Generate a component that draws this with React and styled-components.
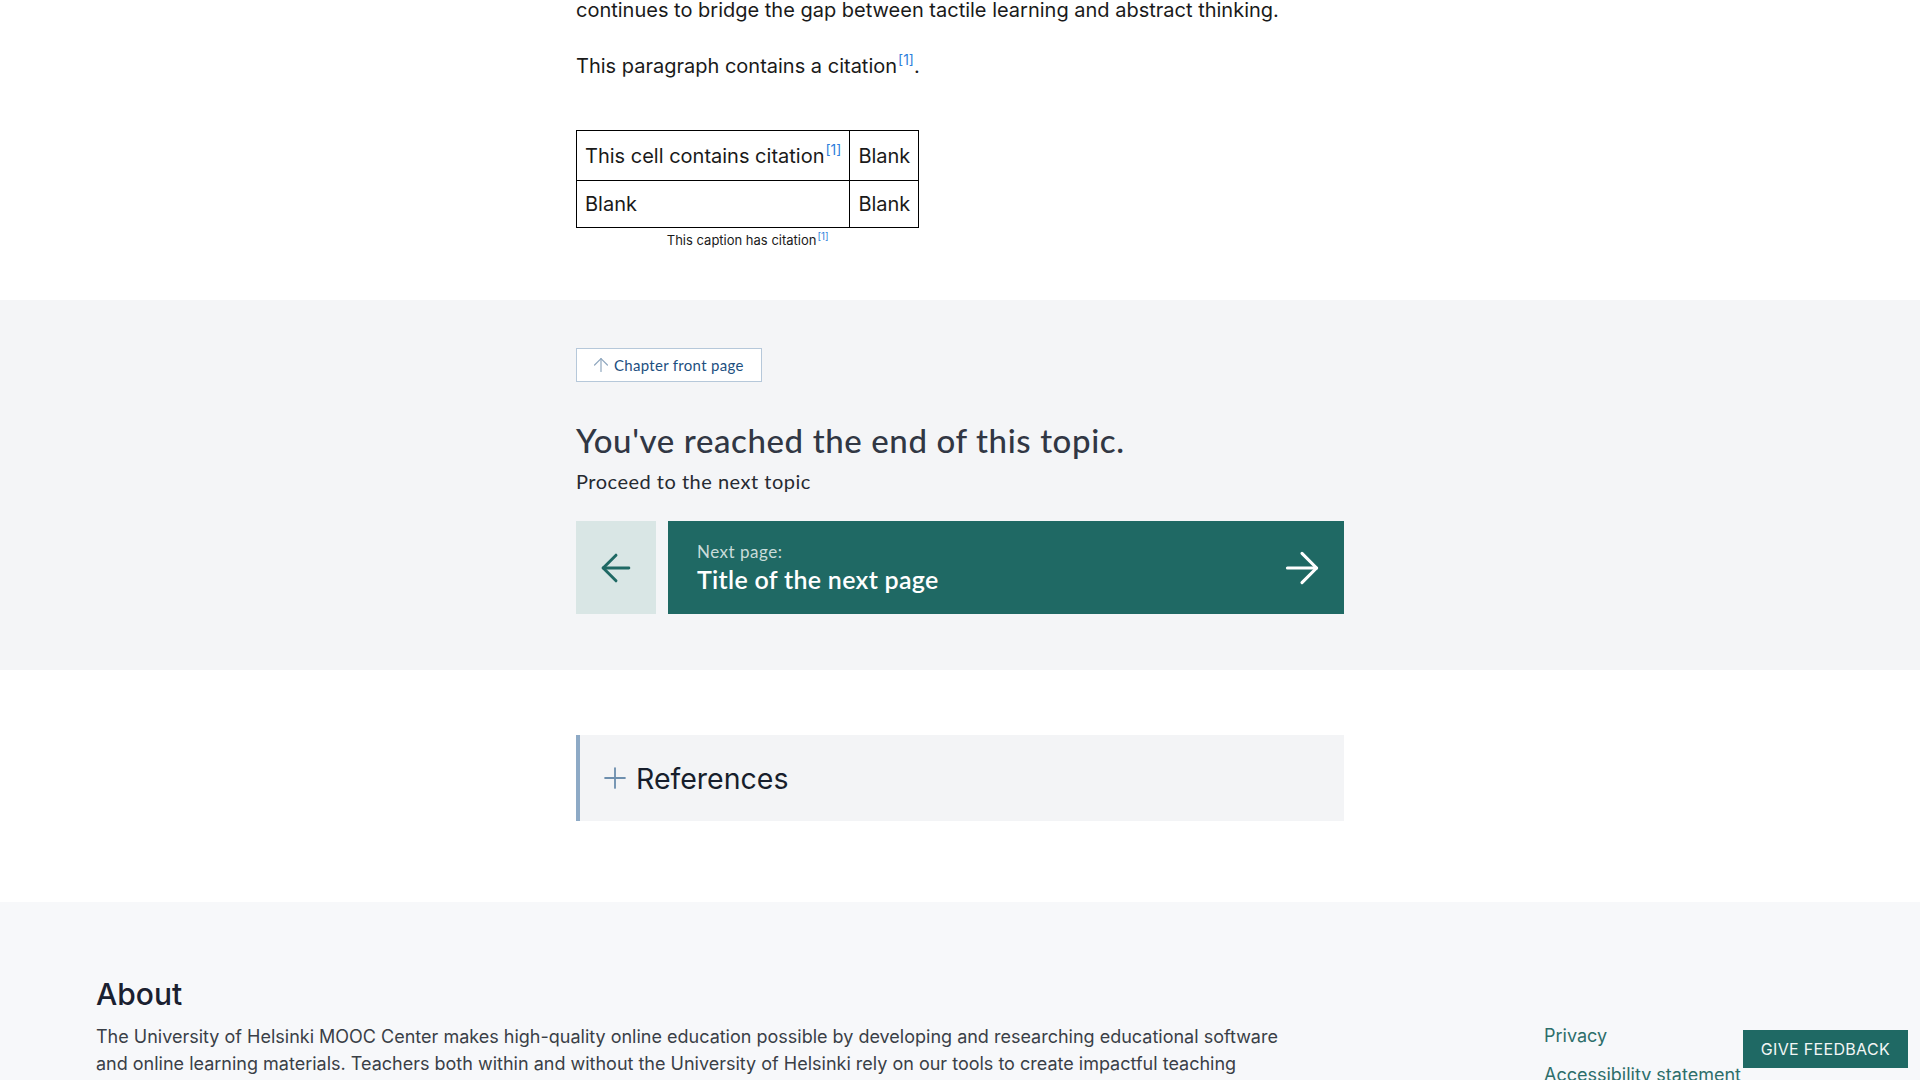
import React from "react";
import styled, { createGlobalStyle } from "styled-components";
import { ArrowLeft, ArrowRight, ArrowUp, Plus } from "lucide-react";

const GlobalStyle = createGlobalStyle`
    body {
        margin: 0;
        font-family: Inter, "Noto Sans", sans-serif;
        color: #1a1a1a;
        background: #fff;
        overflow-x: hidden;
    }
`;

const App = () => {
    return (
        <>
            <GlobalStyle />
            <Article>
                <LeadIn>continues to bridge the gap between tactile learning and abstract thinking.</LeadIn>
                <Paragraph>
                    This paragraph contains a citation<Cite>[1]</Cite>.
                </Paragraph>
                <Figure>
                    <Table>
                        <tbody>
                            <tr>
                                <Cell $tall>This cell contains citation<Cite>[1]</Cite></Cell>
                                <Cell $tall>Blank</Cell>
                            </tr>
                            <tr>
                                <Cell>Blank</Cell>
                                <Cell>Blank</Cell>
                            </tr>
                        </tbody>
                        <Caption>This caption has citation<Cite $small>[1]</Cite></Caption>
                    </Table>
                </Figure>
            </Article>

            <EndSection>
                <Column>
                    <ChapterButton>
                        <ArrowUp size={22} strokeWidth={1.3} color="#8ea6be" />
                        Chapter front page
                    </ChapterButton>
                    <EndTitle>You've reached the end of this topic.</EndTitle>
                    <EndSub>Proceed to the next topic</EndSub>
                    <PageNav>
                        <PrevButton aria-label="Previous page">
                            <ArrowLeft size={44} strokeWidth={1.6} />
                        </PrevButton>
                        <NextButton>
                            <NextText>
                                <NextLabel>Next page:</NextLabel>
                                <NextTitle>Title of the next page</NextTitle>
                            </NextText>
                            <ArrowRight size={50} strokeWidth={1.5} />
                        </NextButton>
                    </PageNav>
                </Column>
            </EndSection>

            <RefSection>
                <Column>
                    <RefToggle>
                        <Plus size={34} strokeWidth={1.3} color="#6e8fae" />
                        References
                    </RefToggle>
                </Column>
            </RefSection>

            <Footer>
                <AboutCol>
                    <AboutTitle>About</AboutTitle>
                    <AboutText>
                        The University of Helsinki MOOC Center makes high-quality online education possible by developing and researching educational software and online learning materials. Teachers both within and without the University of Helsinki rely on our tools to create impactful teaching materials for their courses.
                    </AboutText>
                </AboutCol>
                <LinkCol>
                    <FooterLink href="#">Privacy</FooterLink>
                    <FooterLink href="#">Accessibility statement</FooterLink>
                    <FooterLink href="#">Creators</FooterLink>
                </LinkCol>
            </Footer>

            <FeedbackButton>Give feedback</FeedbackButton>
        </>
    );
};

const Column = styled.div`
    width: 768px;
    margin: 0 auto;
`;

const Article = styled(Column)`
    padding-bottom: 51px;
    font-size: 20px;
    line-height: 32px;
`;

const Paragraph = styled.p`
    margin: 0 0 24px;
`;

const LeadIn = styled(Paragraph)`
    margin-top: -6px;
`;

const Cite = styled.sup`
    color: #2f7fdc;
    font-size: ${props => props.$small ? '0.75em' : '0.7em'};
    line-height: 0;
    margin-left: 1px;
`;

const Figure = styled.figure`
    margin: 48px 0 0;
`;

const Table = styled.table`
    border-collapse: collapse;
    border: 1px solid #000;
`;

const Cell = styled.td`
    border: 1px solid #000;
    padding: ${props => props.$tall ? '10px 8px 9px' : '8px'};
    line-height: 30px;
`;

const Caption = styled.caption`
    caption-side: bottom;
    font-size: 13px;
    line-height: 18px;
    padding-top: 3px;
    color: #1a1a1a;
`;

const EndSection = styled.section`
    background: #f4f5f7;
    padding: 48px 0 56px;
`;

const ChapterButton = styled.button`
    display: inline-flex;
    align-items: center;
    gap: 2px;
    height: 34px;
    padding: 0 17px 0 13px;
    border: 1px solid #b6c8da;
    background: #fff;
    color: #1d4f7f;
    font-family: Lato, "Open Sans", sans-serif;
    font-size: 15px;
    letter-spacing: 0.3px;
    cursor: pointer;
`;

const EndTitle = styled.h2`
    margin: 38px 0 0;
    font-family: Lato, "Open Sans", sans-serif;
    font-weight: 500;
    font-size: 33px;
    line-height: 40px;
    letter-spacing: 0.6px;
    color: #313744;
`;

const EndSub = styled.p`
    margin: 7px 0 0;
    font-family: Lato, "Open Sans", sans-serif;
    font-size: 20px;
    line-height: 28px;
    letter-spacing: 0.5px;
    color: #262a31;
`;

const PageNav = styled.nav`
    display: flex;
    gap: 12px;
    height: 93px;
    margin-top: 26px;
`;

const PrevButton = styled.button`
    width: 80px;
    padding: 0;
    border: none;
    background: #d9e6e5;
    color: #1f6964;
    display: flex;
    align-items: center;
    justify-content: center;
    cursor: pointer;
`;

const NextButton = styled.a`
    flex: 1;
    display: flex;
    align-items: center;
    justify-content: space-between;
    padding: 0 17px 0 29px;
    background: #1f6964;
    color: #fff;
    text-decoration: none;
    cursor: pointer;
`;

const NextText = styled.div`
    display: flex;
    flex-direction: column;
    font-family: Lato, "Open Sans", sans-serif;
`;

const NextLabel = styled.span`
    font-size: 17px;
    line-height: 22px;
    letter-spacing: 0.5px;
    color: #c9dcda;
`;

const NextTitle = styled.span`
    font-size: 25px;
    line-height: 32px;
    letter-spacing: 0.3px;
    font-weight: 600;
`;

const RefSection = styled.section`
    padding: 65px 0 81px;
`;

const RefToggle = styled.button`
    display: flex;
    align-items: center;
    gap: 4px;
    width: 100%;
    height: 86px;
    padding: 0 0 0 18px;
    border: none;
    border-left: 4px solid #8eaac6;
    background: #f3f4f6;
    font-family: Inter, "Noto Sans", sans-serif;
    font-size: 28.5px;
    color: #171e2c;
    cursor: pointer;
`;

const Footer = styled.footer`
    display: flex;
    justify-content: space-between;
    background: #f7f8fa;
    padding: 74px 96px 60px;
`;

const AboutCol = styled.div`
    max-width: 1195px;
`;

const AboutTitle = styled.h3`
    margin: 0;
    font-size: 30px;
    line-height: 36px;
    font-weight: 500;
    color: #1a2030;
`;

const AboutText = styled.p`
    margin: 11px 0 0;
    font-size: 18px;
    line-height: 27px;
    color: #3a3f47;
`;

const LinkCol = styled.div`
    width: 280px;
    display: flex;
    flex-direction: column;
    gap: 12px;
    padding-top: 46px;
`;

const FooterLink = styled.a`
    font-size: 18px;
    line-height: 27px;
    color: #2d6e6a;
    text-decoration: none;
`;

const FeedbackButton = styled.button`
    position: fixed;
    right: 12px;
    bottom: 12px;
    height: 38px;
    padding: 0 18px;
    border: none;
    background: #1f6964;
    color: #f2f6f5;
    font-family: Inter, "Noto Sans", sans-serif;
    font-size: 16px;
    letter-spacing: 0.02em;
    text-transform: uppercase;
    cursor: pointer;
`;

export default App;
